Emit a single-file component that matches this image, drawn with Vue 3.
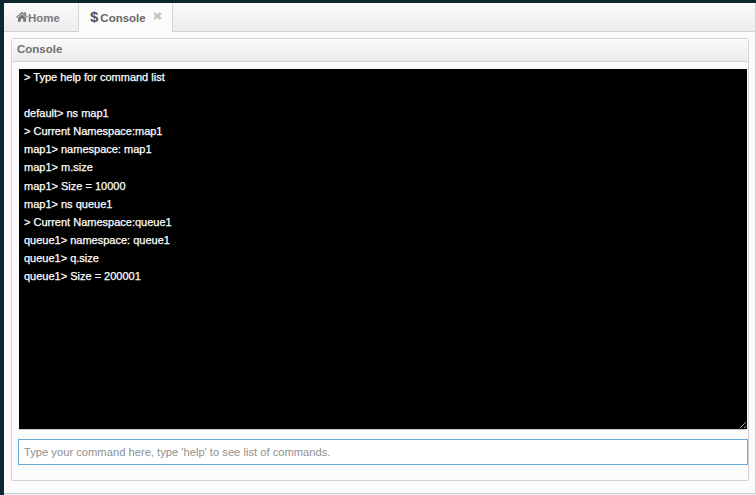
<script setup>
const log = `> Type help for command list

default> ns map1
> Current Namespace:map1
map1> namespace: map1
map1> m.size
map1> Size = 10000
map1> ns queue1
> Current Namespace:queue1
queue1> namespace: queue1
queue1> q.size
queue1> Size = 200001`
</script>

<template>
  <div class="page">
    <div class="window">
      <div class="tabs">
        <div class="tab">
          <svg class="home" viewBox="0 0 14 12" width="12" height="11">
            <path d="M7 0.5 L0 6.6 L1 7.6 L7 2.4 L13 7.6 L14 6.6 L11.6 4.5 V1 H9.8 V2.9 Z" fill="#777" />
            <path d="M7 3.4 L2.2 7.5 V12 H5.6 V8.6 H8.4 V12 H11.8 V7.5 Z" fill="#777" />
          </svg>
          <span>Home</span>
        </div>
        <div class="tab active">
          <span class="dollar">$</span>
          <span>Console</span>
          <svg class="close" viewBox="0 0 9 8" width="9" height="8">
            <path d="M1.2 1 L7.8 7 M7.8 1 L1.2 7" stroke="#c6c6c6" stroke-width="2.6" fill="none" />
          </svg>
        </div>
      </div>
      <div class="body">
        <section class="panel">
          <header class="panel-head">Console</header>
          <div class="panel-body">
            <div class="terminal"><pre class="log">{{ log }}</pre></div>
            <input class="cmd" type="text" placeholder="Type your command here, type 'help' to see list of commands." />
          </div>
        </section>
      </div>
    </div>
  </div>
</template>

<style>
html, body { margin: 0; background: #0e2630; }
</style>

<style scoped>
.page {
  width: 756px;
  height: 495px;
  box-sizing: border-box;
  padding: 3px 0 0 4px;
  overflow: hidden;
  font-family: "Liberation Sans", Arial, sans-serif;
}
.window {
  width: 752px;
  height: 491px;
  box-sizing: border-box;
  background: #fbfbfb;
  border-right: 1px solid #cfcfcf;
  border-bottom: 1px solid #cfcfcf;
  box-shadow: 0 1px 0 #ececec;
  display: flex;
  flex-direction: column;
}
.tabs {
  height: 29px;
  flex: none;
  display: flex;
  box-sizing: border-box;
  background: linear-gradient(#fafafa, #ececec);
  border-bottom: 1px solid #cfcfcf;
}
.tab {
  display: flex;
  align-items: center;
  box-sizing: border-box;
  width: 74px;
  height: 29px;
  padding-left: 12px;
  font-size: 11.5px;
  font-weight: bold;
  color: #7a7a7a;
}
.home { flex: none; margin-bottom: 2px; }
.tab.active {
  width: 95px;
  height: 29px;
  padding-left: 11px;
  background: #fbfbfb;
  border-left: 1px solid #d6d6d6;
  border-right: 1px solid #d6d6d6;
  color: #666;
}
.dollar { font-size: 15px; font-weight: bold; margin-right: 2px; color: #555; margin-bottom: 3px; }
.close { flex: none; margin-left: 7px; margin-bottom: 4px; }
.body { flex: 1; padding: 6px 6px 12px 7px; display: flex; min-height: 0; }
.panel {
  flex: 1;
  display: flex;
  flex-direction: column;
  box-sizing: border-box;
  border: 1px solid #d2d2d2;
  border-radius: 2px;
  background: #fbfbfb;
}
.panel-head {
  height: 23px;
  flex: none;
  box-sizing: border-box;
  padding: 4px 0 0 5px;
  font-size: 11.5px;
  font-weight: bold;
  color: #707070;
  background: linear-gradient(#fafafa, #ececec);
  border-bottom: 1px solid #d2d2d2;
}
.panel-body {
  flex: 1;
  padding: 7px 0 0 6px;
  display: flex;
  flex-direction: column;
}
.terminal {
  width: 728px;
  height: 361px;
  box-sizing: border-box;
  margin: 0 0 0 1px;
  padding: 0 5px;
  background: #000;
  color: #fff;
  border-bottom: 1px solid #ccc;
  overflow: auto;
  resize: both;
}
.log {
  margin: -1px 0 0;
  font-family: "Liberation Sans", Arial, sans-serif;
  font-size: 11px;
  line-height: 18.1px;
  -webkit-text-stroke: 0.25px #fff;
}
.cmd {
  display: block;
  width: 730px;
  height: 26px;
  box-sizing: border-box;
  margin: 9px 0 0;
  padding: 0 5px;
  border: 1px solid #6aaad6;
  background: #fff;
  outline: none;
  font-family: "Liberation Sans", Arial, sans-serif;
  font-size: 11.2px;
}
.cmd::placeholder { color: #8f8f8f; opacity: 1; }
</style>
